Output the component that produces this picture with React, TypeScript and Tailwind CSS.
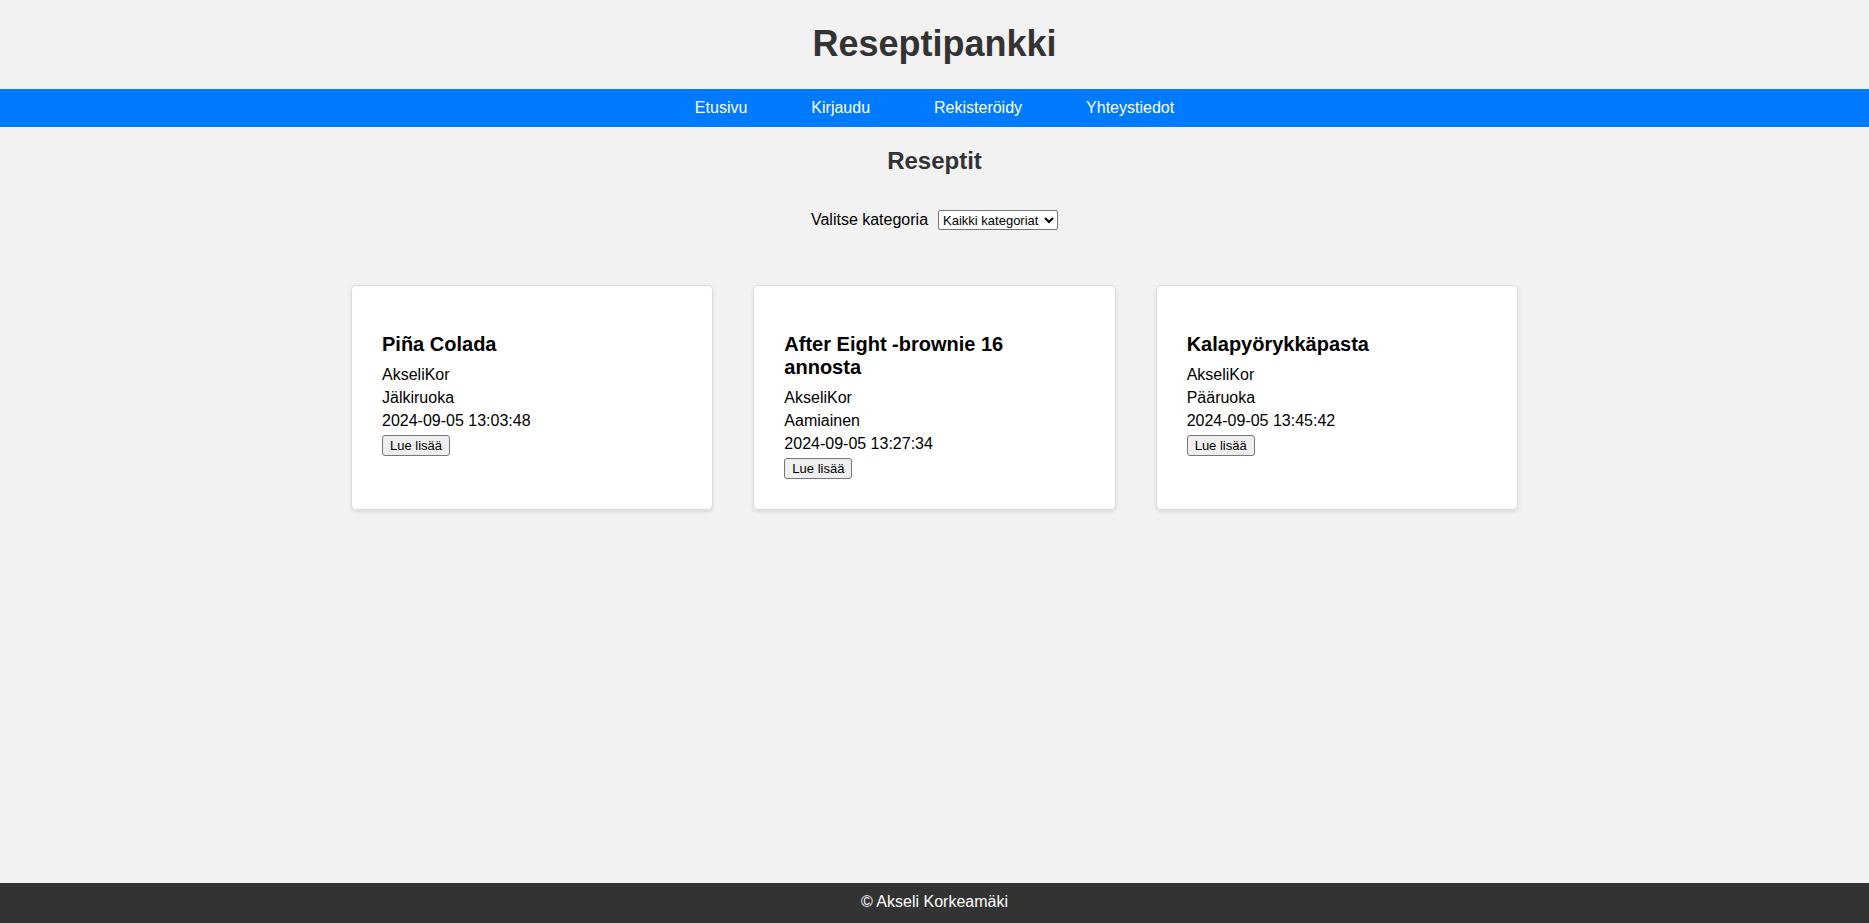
const navLinks = ["Etusivu", "Kirjaudu", "Rekisteröidy", "Yhteystiedot"];

const categories = ["Kaikki kategoriat", "Aamiainen", "Jälkiruoka", "Pääruoka"];

type Recipe = {
  title: string;
  author: string;
  category: string;
  created: string;
};

const recipes: Recipe[] = [
  { title: "Piña Colada", author: "AkseliKor", category: "Jälkiruoka", created: "2024-09-05 13:03:48" },
  { title: "After Eight -brownie 16 annosta", author: "AkseliKor", category: "Aamiainen", created: "2024-09-05 13:27:34" },
  { title: "Kalapyörykkäpasta", author: "AkseliKor", category: "Pääruoka", created: "2024-09-05 13:45:42" },
];

function RecipeCard({ recipe }: { recipe: Recipe }) {
  return (
    <article className="rounded-[5px] border border-[#dddddd] bg-white px-[30px] pt-[47px] pb-[30px] shadow-[0_2px_4px_rgba(0,0,0,0.1)]">
      <h3 className="text-[20px] leading-[23px] font-bold">{recipe.title}</h3>
      <div className="mt-[7px] leading-[23px]">
        <p>{recipe.author}</p>
        <p>{recipe.category}</p>
        <p>{recipe.created}</p>
      </div>
      <button
        type="button"
        className="mt-[3px] block rounded-[3px] border border-[#767676] bg-[#efefef] px-[7px] py-0.5 text-[13px] leading-[15px]"
      >
        Lue lisää
      </button>
    </article>
  );
}

export default function App() {
  return (
    <div className="flex min-h-screen flex-col bg-[#f2f2f2] font-['Liberation_Sans',Arial,sans-serif] text-base text-black">
      <header className="pt-[23px] pb-[25px] text-center">
        <h1 className="text-[36px] leading-[41px] font-bold text-[#333333]">Reseptipankki</h1>
      </header>
      <nav className="bg-[#007bff] py-2.5">
        <ul className="flex flex-wrap justify-center gap-x-16">
          {navLinks.map((label) => (
            <li key={label} className="leading-[18px]">
              <a href="#" className="text-white">
                {label}
              </a>
            </li>
          ))}
        </ul>
      </nav>
      <main className="flex grow flex-col items-center px-5 pt-5 pb-10">
        <h2 className="text-2xl leading-7 font-bold text-[#333333]">Reseptit</h2>
        <form className="mt-[35px] flex items-center justify-center gap-2.5">
          <label htmlFor="category" className="leading-5">
            Valitse kategoria
          </label>
          <select
            id="category"
            className="h-5 w-[120px] rounded-[2px] border border-[#767676] bg-white text-[13px] leading-4"
          >
            {categories.map((name) => (
              <option key={name}>{name}</option>
            ))}
          </select>
        </form>
        <section className="mt-[55px] grid w-full max-w-[1167px] grid-cols-1 gap-10 md:grid-cols-3">
          {recipes.map((recipe) => (
            <RecipeCard key={recipe.title} recipe={recipe} />
          ))}
        </section>
      </main>
      <footer className="bg-[#333333] pt-2.5 pb-3 text-center leading-[18px] text-white">
        <p>© Akseli Korkeamäki</p>
      </footer>
    </div>
  );
}
